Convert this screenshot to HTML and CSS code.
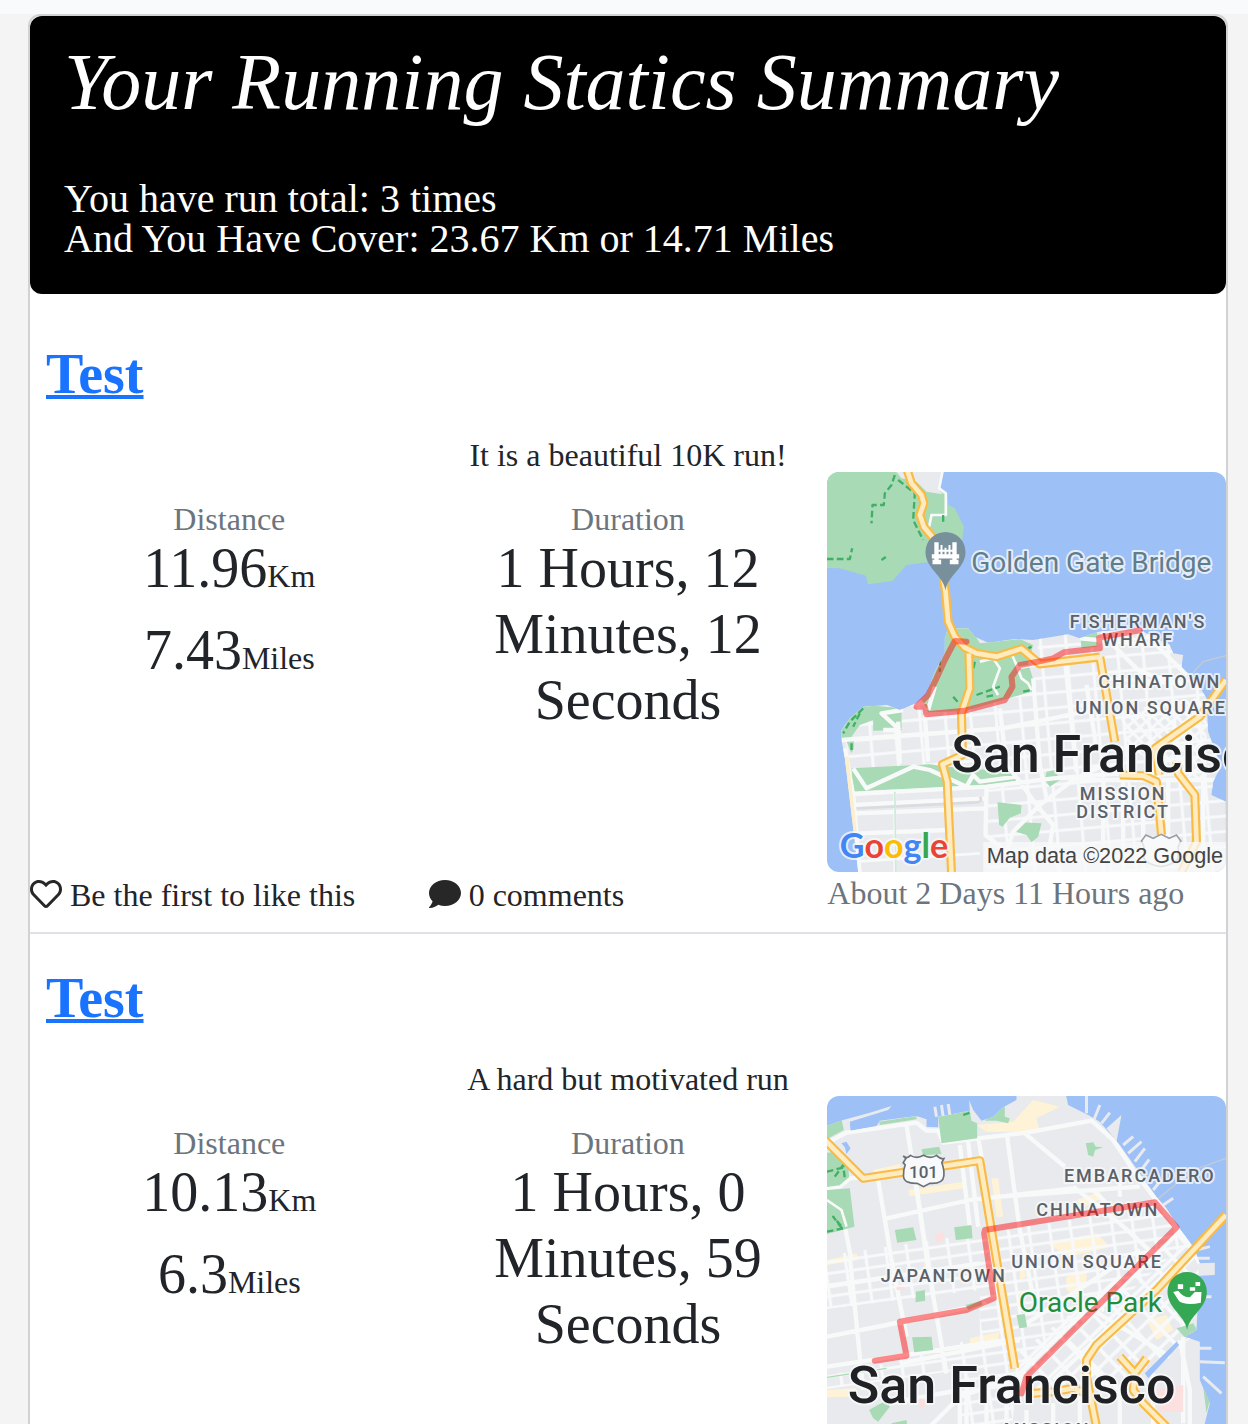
FILE: index.html
```html
<!DOCTYPE html>
<html lang="en">
<head>
  <meta charset="utf-8">
  <meta name="viewport" content="width=device-width, initial-scale=1">
  <title>Your Running Statics Summary</title>
  <link rel="stylesheet" href="styles.css">
</head>
<body>
  <div class="topbar"></div>
  <main class="feed">
    <header class="summary">
      <h1 class="summary-title">Your Running Statics Summary</h1>
      <p class="summary-text">You have run total: 3 times</p>
      <p class="summary-text">And You Have Cover: 23.67 Km or 14.71 Miles</p>
    </header>

    <article class="run">
      <h2 class="run-title"><a href="#run-1">Test</a></h2>
      <p class="run-note">It is a beautiful 10K run!</p>
      <div class="run-grid">
        <section class="stat">
          <p class="stat-label">Distance</p>
          <p class="stat-value">11.96<span class="unit">Km</span></p>
          <p class="stat-value">7.43<span class="unit">Miles</span></p>
        </section>
        <section class="stat">
          <p class="stat-label">Duration</p>
          <p class="stat-value">1 Hours, 12 Minutes, 12 Seconds</p>
        </section>
        <svg class="map" viewBox="21 21 1197 1200" preserveAspectRatio="xMidYMid slice" role="img" aria-label="Route map, Golden Gate Bridge to Fisherman's Wharf">
          <defs>
            <pattern id="blocks-a" width="76" height="46" patternUnits="userSpaceOnUse" patternTransform="rotate(-5)">
              <path d="M0 5H76M5 0V46" stroke="#f8f9fa" stroke-width="9" fill="none"/>
            </pattern>
            <pattern id="blocks-b" width="26" height="26" patternUnits="userSpaceOnUse" patternTransform="rotate(-42)">
              <path d="M0 5H26M5 0V26" stroke="#f8f9fa" stroke-width="9" fill="none"/>
            </pattern>
            <path id="land-a" d="M375 520L385 490L445 490L465 515L505 533L585 522L640 525L745 508L780 520L835 500L950 490L1050 540L1060 565L1090 570L1085 605L1130 650L1160 700L1165 800L1190 870L1205 900L1180 950L1175 990L1218 1010V1221H115L100 1090L75 880L65 825L65 795L90 760L130 725L200 720L240 735L290 715L320 690L345 620L375 565Z"/>
            <clipPath id="clip-a"><use href="#land-a"/></clipPath>
          </defs>
          <rect class="water" x="0" y="0" width="1240" height="1240"/>
          <path class="park" d="M0 0H370L358 70L382 85L385 120L405 130L432 185L425 240L340 280L320 292L260 300L218 348L145 358L138 332L60 310L0 308Z"/>
          <path class="land" d="M225 15H372L355 70L368 88L320 80L290 50L245 40Z"/>
          <path class="street" d="M368 20L358 70L378 85V150H335L328 185"/>
          <path class="trail" d="M225 30L215 60L195 85L192 120L158 120L155 175M235 45L285 85L280 165L310 225M21 282H90L97 250M185 285L198 276M370 150V170"/>
          <use href="#land-a" class="land"/>
          <g clip-path="url(#clip-a)">
            <path fill="url(#blocks-a)" d="M60 720L640 640L660 500H1220V1221H500V960H100Z"/>
            <path fill="url(#blocks-b)" d="M900 740L1110 700L1160 700V960L1010 900L920 840Z"/>
            <path class="park" d="M375 485H450L480 535L600 522L640 540L625 595L650 675L550 705L435 738L325 742L300 690L345 620L365 560ZM780 502L832 500V545L785 550ZM60 830L65 795L90 760L130 720L245 728V795L160 797V765L120 780L95 815ZM78 825L102 818V850L95 865ZM95 910L330 898L385 905L590 922L588 955L440 965L180 975L98 980ZM680 920L705 915L720 945L690 965L675 945ZM533 1012L605 1020L603 1045L570 1058L548 1085L538 1080ZM600 1072L665 1075L655 1115L635 1132L620 1110L588 1100Z"/>
            <path class="street wide" d="M65 825L550 790L820 735M75 850L100 990L120 1230M100 987L500 965L700 940L900 925M105 1020L500 1000M110 1045L500 1030M190 795L240 795M240 795L185 745L250 735M345 665L325 735M235 770L240 895M315 750L325 890M500 965L497 1110L560 1160L580 1100L660 1020L760 945L850 900M540 730L560 900L600 950L650 1020L700 1080L690 1140L720 1220M640 640L660 900L680 1000M735 580L770 920M800 660L830 850M100 910L140 970L280 905L330 915L440 965L460 930L480 950L590 935M780 945H1218M850 950V1221M910 950V1221M970 1000V1221M1045 950V1130M1150 930V1221M780 520L1050 545M880 540L960 620L1090 660M980 510L1100 630M840 640L1090 655M120 1105L380 1095"/>
            <path class="street" d="M480 590L520 580L540 610L520 665L535 690M570 555L590 600L605 640L625 655L635 675M590 610L650 600M110 1190L480 1165M225 980V1221"/>
            <path d="M110 1030L470 1012Q490 1010 480 995" fill="none" stroke="#dadce0" stroke-width="8"/>
            <path d="M225 980L228 1221" fill="none" stroke="#ceead6" stroke-width="5"/>
            <path d="M80 875L105 1100" fill="none" stroke="#fdefcb" stroke-width="12"/>
            <path class="trail" d="M130 730L90 770L70 805M120 745L100 785M95 835V860M360 580V620M465 590L455 640M400 695L415 712M470 690L540 665M610 680L632 676M500 695L525 690M625 550L635 545"/>
          </g>
          <path d="M1110 635L1150 590L1218 572" fill="none" stroke="#c5cad2" stroke-width="4"/>
          <path class="highway-edge" d="M262 15L275 55L305 90L312 115L300 150L312 185L345 225L375 285M370 340L377 380L385 470L405 515L435 548L470 565L530 575L605 551L660 597L840 576M447 565L450 670L425 745L428 870L368 898L382 950L395 1221M840 576L855 660L885 830M900 930L970 932L1010 950L1025 1110M1218 645L1140 755L1005 850L1018 930M1070 890L1075 925L1125 990L1130 1130L1085 1221"/>
          <path class="highway" d="M262 15L275 55L305 90L312 115L300 150L312 185L345 225L375 285M370 340L377 380L385 470L405 515L435 548L470 565L530 575L605 551L660 597L840 576M447 565L450 670L425 745L428 870L368 898L382 950L395 1221M840 576L855 660L885 830M900 930L970 932L1010 950L1025 1110M1218 645L1140 755L1005 850L1018 930M1070 890L1075 925L1125 990L1130 1130L1085 1221"/>
          <path d="M377 376C370 330 317 310 317 261A60 60 0 0 1 437 261C437 310 384 330 377 376Z" fill="#78909c"/>
          <path d="M350 232V292M404 232V292M336 274H418M338 291H364M390 291H416" fill="none" stroke="#fff" stroke-width="13"/>
          <path d="M350 257H404M365 240V274M377 248V274M389 240V274" fill="none" stroke="#fff" stroke-width="6"/>
          <text class="place bridge" x="454" y="320">Golden Gate Bridge</text>
          <text class="area" x="955" y="490">FISHERMAN'S</text>
          <text class="area" x="955" y="543">WHARF</text>
          <text class="area" x="1020" y="668">CHINATOWN</text>
          <text class="area" x="994" y="746">UNION SQUARE</text>
          <text class="city" x="394" y="920">San Francisco</text>
          <text class="area" x="910" y="1005">MISSION</text>
          <text class="area" x="910" y="1058">DISTRICT</text>
          <path class="route" d="M960 496L838 518L840 550L732 562L700 580L655 590L600 600L575 635L578 665L555 705L435 737L320 748L315 725H290L325 690L350 640L375 585L405 528L440 530"/>
          <path d="M965 1128L978 1110L1000 1120L1024 1108L1048 1120L1070 1110L1083 1128L1075 1145V1180Q1060 1200 1024 1205Q985 1200 972 1180V1145Z" fill="#f8f9fa" stroke="#9aa0a6" stroke-width="5"/>
          <rect x="490" y="1131" width="728" height="90" fill="#f8f9fa" opacity=".75"/>
          <text class="logo" x="60" y="1179"><tspan fill="#4285f4">G</tspan><tspan fill="#ea4335">o</tspan><tspan fill="#fbbc04">o</tspan><tspan fill="#4285f4">g</tspan><tspan fill="#34a853">l</tspan><tspan fill="#ea4335">e</tspan></text>
          <text class="credit" x="501" y="1195">Map data ©2022 Google</text>
        </svg>
      </div>
      <footer class="run-footer">
        <button class="action" type="button"><svg class="icon" viewBox="0 0 512 512" aria-hidden="true"><path d="M458.4 64.3C400.6 15.7 311.3 23 256 79.3 200.7 23 111.4 15.6 53.6 64.3-21.6 127.6-10.6 230.8 43 285.5l175.4 178.7c10 10.2 23.4 15.9 37.6 15.9 14.3 0 27.6-5.6 37.6-15.8L469 285.6c53.5-54.7 64.7-157.9-10.6-221.3zm-23.6 187.5L259.4 430.5c-2.4 2.4-4.4 2.4-6.8 0L77.2 251.8c-36.5-37.2-43.9-107.6 7.3-150.7 38.9-32.7 98.9-27.8 136.5 10.5l35 35.7 35-35.7c37.8-38.5 97.8-43.2 136.5-10.6 51.1 43.1 43.5 113.9 7.3 150.8z"/></svg>Be the first to like this</button>
        <a class="action" href="#comments-1"><svg class="icon" viewBox="0 0 512 512" aria-hidden="true"><path d="M256 32C114.6 32 0 125.1 0 240c0 49.6 21.4 95 57 130.7C44.5 421.1 2.7 466 2.2 466.5c-2.2 2.3-2.8 5.7-1.5 8.7S4.8 480 8 480c66.3 0 116-31.8 140.6-51.4 32.7 12.3 69 19.4 107.4 19.4 141.4 0 256-93.1 256-208S397.4 32 256 32z"/></svg>0 comments</a>
        <p class="age">About 2 Days 11 Hours ago</p>
      </footer>
    </article>

    <article class="run">
      <h2 class="run-title"><a href="#run-2">Test</a></h2>
      <p class="run-note">A hard but motivated run</p>
      <div class="run-grid">
        <section class="stat">
          <p class="stat-label">Distance</p>
          <p class="stat-value">10.13<span class="unit">Km</span></p>
          <p class="stat-value">6.3<span class="unit">Miles</span></p>
        </section>
        <section class="stat">
          <p class="stat-label">Duration</p>
          <p class="stat-value">1 Hours, 0 Minutes, 59 Seconds</p>
        </section>
        <svg class="map" viewBox="21 18 1197 1200" preserveAspectRatio="xMidYMid slice" role="img" aria-label="Route map, downtown San Francisco">
          <defs>
            <pattern id="blocks-c" width="62" height="34" patternUnits="userSpaceOnUse" patternTransform="rotate(-8)">
              <path d="M0 5H62M5 0V34" stroke="#f8f9fa" stroke-width="9" fill="none"/>
            </pattern>
            <pattern id="blocks-d" width="58" height="42" patternUnits="userSpaceOnUse" patternTransform="rotate(-44)">
              <path d="M0 6H58M6 0V42" stroke="#f8f9fa" stroke-width="11" fill="none"/>
            </pattern>
            <path id="land-b" d="M0 115L70 90L150 68L215 48L205 60L90 95L92 122L170 108L180 92L290 78L320 88V110L355 112V80L450 62L448 30L460 60L485 92L520 80L550 52L590 30V0H735L745 45L805 75L840 95L900 165L960 250L1010 320L1040 355L1075 410L1120 470L1140 520L1130 720L1095 740L1140 755V870L1170 940L1155 1000L1170 1218H0Z"/>
            <clipPath id="clip-b"><use href="#land-b"/></clipPath>
          </defs>
          <rect class="water" x="0" y="0" width="1240" height="1240"/>
          <path d="M822 90L840 45M845 100L870 68M800 70V18M910 165L940 140M925 190L965 155M945 215L975 175M965 240L988 208M1000 300L1020 275M1030 345L1060 325M1110 485L1170 470M1130 505H1170M1130 620H1175M1130 775H1175M1140 815L1215 818M1150 860L1205 910M350 80L345 50M370 80L365 45M390 75L385 42" fill="none" stroke="#e8eaed" stroke-width="9"/>
          <path class="land" d="M860 115L905 75L890 155ZM1130 520L1185 518V555L1130 558Z"/>
          <path d="M1010 330L1120 240L1218 205" fill="none" stroke="#c5cad2" stroke-width="4"/>
          <use href="#land-b" class="land"/>
          <g clip-path="url(#clip-b)">
            <path d="M470 105L580 95L640 30L720 50L650 85L660 125L500 125ZM160 240L240 222L245 240L170 255ZM265 300L430 275L435 295L270 318ZM515 265H535L550 380H530ZM770 330L840 305L850 325L790 350ZM680 460L830 430L870 470L750 500ZM740 560L800 540V580L770 620L740 600ZM450 745L540 725L530 760L450 770ZM980 690L1040 675L1060 720L1010 750ZM21 510L110 490L115 510L21 525ZM21 900L110 895L90 920L21 922ZM310 410L330 560L315 560ZM600 500L620 560L600 570Z" fill="#fef3d6"/>
            <path fill="url(#blocks-c)" d="M0 500L480 430L1010 350L1110 450L880 650L700 740L590 860L560 1218H420V840L0 900V860L200 820L480 740V600L0 660Z"/>
            <path fill="url(#blocks-d)" d="M1080 420L1140 500L1120 740L880 900L790 880L600 920L580 800L740 680Z"/>
            <path class="street wide" d="M0 170L80 128L290 98L320 122H355L370 158L620 128L815 92L880 150L940 240L1100 450L1140 520M260 105L275 200L320 500M175 270L215 510L260 740M290 290L330 560L380 850M420 165L450 410M445 155L475 410M475 140L490 230M562 140L600 420L640 620M615 130L735 230M200 385L450 330L760 295M540 320L960 290M21 295L60 290L90 265L130 262M21 330L65 360L95 510M90 500L130 900M21 590L480 520M21 740L200 705L500 640M21 830L560 750M240 820L600 750M760 290L900 400L1010 500M820 300L860 340M900 270V320M1090 740V1000M1080 750L1110 900V1218M620 700L960 480M600 850L900 560M700 870L1060 530M740 750L900 900M820 660L1050 800M180 945L420 900L420 1218M330 1010L420 920L620 850M440 860V1218M500 850V1218M560 850V1218M620 960V1218M700 940V1218M780 900V1218M900 900V1218M1000 850V1218"/>
            <path class="park" d="M0 95L65 88L72 120L0 158ZM178 95L290 78V88L180 105ZM355 80L450 62L455 92L472 100V145L365 160ZM495 92L555 45V80L570 85L565 100L530 92ZM305 178L358 170L365 192L310 196ZM0 190L60 185L85 220L88 265L65 290L21 295ZM21 300L90 295L104 410L21 432V345ZM225 420L280 412L290 450L232 458ZM403 412L455 405L458 445L408 450ZM798 160L820 157L828 170L850 172L826 180L820 200L805 195ZM288 605L315 600L316 632L287 637ZM437 645L485 632L488 645L445 660ZM590 675L615 672L622 712L598 715ZM277 742L335 740L340 780L283 787ZM148 960L200 930L210 950L175 995L160 985ZM1070 715L1120 700L1132 720L1095 742ZM1150 890L1170 930L1160 970ZM215 1000L260 990L265 1030H210Z"/>
            <path d="M345 435L370 425L375 450L350 458ZM1010 900L1090 885V965H1020ZM230 590H255V600H230ZM297 925L340 930L300 960Z" fill="#fce0e0"/>
            <path class="water" d="M65 160L80 155L92 175L80 192L75 172ZM975 850L1070 755L1078 765L985 865Z"/>
            <path class="street" d="M21 295L60 290L90 265M21 330L65 360L80 410"/>
            <path class="trail" d="M21 245L80 230M45 260L70 225L75 265M21 425L70 415L40 380L70 420M430 75L450 68"/>
            <path d="M21 862L100 850L200 835" fill="none" stroke="#a8dab5" stroke-width="4"/>
          </g>
          <path class="highway-edge" d="M0 135L45 180L130 265L480 212L515 420L585 835M1218 375L1010 600L830 765L800 810V860L830 1010V1218M900 800L945 850L980 805M945 850L940 900L970 940L1040 1010M640 910L700 905L760 895L800 910"/>
          <path class="highway" d="M0 135L45 180L130 265L480 212L515 420L585 835M1218 375L1010 600L830 765L800 810V860L830 1010V1218M900 800L945 850L980 805M945 850L940 900L970 940L1040 1010M640 910L700 905L760 895L800 910"/>
          <path d="M250 218L258 206L250 198Q262 208 272 196Q290 208 311 196Q332 208 350 196Q362 208 372 206L366 218Q374 240 372 258Q370 282 330 280L311 290L292 280Q252 282 251 258Q250 240 256 225Z" fill="#f8f9fa" stroke="#6b7075" stroke-width="5"/>
          <text class="shield" x="311" y="264">101</text>
          <text class="area" x="960" y="276">EMBARCADERO</text>
          <text class="area" x="834" y="378">CHINATOWN</text>
          <text class="area" x="802" y="533">UNION SQUARE</text>
          <text class="area" x="372" y="575">JAPANTOWN</text>
          <text class="place stadium" x="597" y="665">Oracle Park</text>
          <text class="city" x="84" y="939">San Francisco</text>
          <text class="area" x="682" y="1037">MISSION</text>
          <path class="route" d="M165 812L260 797L240 695L440 660L522 625L493 430L495 420L1005 337L1070 412L620 860L605 910"/>
          <path d="M1102 720C1095 675 1043 655 1043 605A59 59 0 0 1 1161 605C1161 655 1109 675 1102 720Z" fill="#34a853"/>
          <path d="M1060 606L1075 602Q1090 622 1110 622L1125 606H1145L1143 638Q1100 648 1078 634ZM1074 583H1090V597H1074ZM1127 576H1141V588H1127ZM1110 592H1126V602H1110Z" fill="#fff"/>
        </svg>
      </div>
      <footer class="run-footer">
        <button class="action" type="button"><svg class="icon" viewBox="0 0 512 512" aria-hidden="true"><path d="M458.4 64.3C400.6 15.7 311.3 23 256 79.3 200.7 23 111.4 15.6 53.6 64.3-21.6 127.6-10.6 230.8 43 285.5l175.4 178.7c10 10.2 23.4 15.9 37.6 15.9 14.3 0 27.6-5.6 37.6-15.8L469 285.6c53.5-54.7 64.7-157.9-10.6-221.3zm-23.6 187.5L259.4 430.5c-2.4 2.4-4.4 2.4-6.8 0L77.2 251.8c-36.5-37.2-43.9-107.6 7.3-150.7 38.9-32.7 98.9-27.8 136.5 10.5l35 35.7 35-35.7c37.8-38.5 97.8-43.2 136.5-10.6 51.1 43.1 43.5 113.9 7.3 150.8z"/></svg>Be the first to like this</button>
      </footer>
    </article>
  </main>
</body>
</html>
```
FILE: styles.css
```css
* {
  box-sizing: border-box;
}

html {
  height: 100%;
  overflow: hidden;
}

body {
  height: 100%;
  margin: 0;
  overflow: auto;
  scrollbar-width: none;
  background: #f4f4f4;
  color: #212529;
  font-family: "Liberation Serif", "Times New Roman", serif;
  font-size: 32px;
  line-height: 48px;
}

h1,
h2,
p {
  margin: 0;
  font-weight: 400;
}

.topbar {
  height: 14px;
  background: #f8fafc;
}

.feed {
  margin: 0 20px 0 28px;
  border: 2px solid #d0d2d3;
  border-radius: 12px;
  background: #fff;
}

.summary {
  padding: 17px 34px 35px;
  border-radius: 12px;
  background: #000;
  color: #fff;
}

.summary-title {
  margin-bottom: 48px;
  font-size: 80px;
  font-style: italic;
  line-height: 98px;
}

.summary-text {
  font-size: 40px;
  line-height: 40px;
}

.run {
  padding: 47px 0 14px;
  border-bottom: 2px solid #dee2e6;
}

.run + .run {
  padding-top: 31px;
}

.run-title {
  margin: 0 16px 32px;
  font-size: 56px;
  font-weight: 700;
  line-height: 66px;
}

.run-title a {
  color: #1a73ff;
  text-decoration-thickness: 4px;
  text-underline-offset: 2px;
  text-decoration-skip-ink: none;
}

.run-note {
  padding-bottom: 1px;
  line-height: 32px;
  text-align: center;
}

.run-grid,
.run-footer {
  display: grid;
  grid-template-columns: repeat(3, 1fr);
}

.stat {
  padding: 31px 48px 0;
  text-align: center;
}

.stat-label {
  color: #6c757d;
  line-height: 32px;
}

.stat-value {
  margin-bottom: 16px;
  font-size: 56px;
  line-height: 66px;
}

.unit {
  font-size: 32px;
  line-height: 32px;
}

.map {
  display: block;
  width: 100%;
  height: 400px;
  border-radius: 12px;
}

.action {
  display: flex;
  align-items: center;
  gap: 8px;
  padding: 0;
  border: 0;
  background: none;
  color: #212529;
  font: inherit;
  line-height: 46px;
  text-align: left;
  text-decoration: none;
}

.icon {
  flex: none;
  width: 32px;
  height: 32px;
  margin-bottom: 2px;
  fill: #272727;
}

.age {
  color: #6c757d;
  line-height: 42px;
}

/* Map drawing, in map units: three to a pixel */

.water {
  fill: #9dc0f7;
}

.land {
  fill: #e8eaed;
}

.park {
  fill: #a8dab5;
}

.trail,
.street,
.highway,
.highway-edge,
.route {
  fill: none;
  stroke-linejoin: round;
}

.trail {
  stroke: #41b067;
  stroke-width: 7px;
  stroke-dasharray: 20 10;
}

.street {
  stroke: #f8fafa;
  stroke-width: 8px;
}

.street.wide {
  stroke-width: 13px;
}

.highway-edge {
  stroke: #f9bb45;
  stroke-width: 27px;
}

.highway {
  stroke: #feebbf;
  stroke-width: 14px;
}

.route {
  stroke: #ff0000;
  stroke-linecap: round;
  stroke-opacity: 0.45;
  stroke-width: 18px;
}

.map text {
  font-family: Roboto, sans-serif;
  paint-order: stroke;
  stroke: #f8f9fa;
  stroke-linejoin: round;
  stroke-opacity: 0.8;
  stroke-width: 12px;
}

.map .place {
  font-size: 84px;
}

.map .bridge {
  fill: #607d8b;
}

.map .stadium {
  fill: #1e8e3e;
}

.map .area {
  fill: #5b6168;
  font-size: 54px;
  font-weight: 500;
  letter-spacing: 6px;
  text-anchor: middle;
}

.map .city {
  fill: #202124;
  font-size: 156px;
  font-weight: 500;
}

.map .shield {
  fill: #5b6168;
  font-size: 51px;
  font-weight: 500;
  stroke: none;
  text-anchor: middle;
}

.map .logo {
  font-family: Lato, sans-serif;
  font-size: 102px;
  font-weight: 700;
}

.map .credit {
  fill: #444;
  font-family: "Liberation Sans", Arial, sans-serif;
  font-size: 65px;
  stroke: none;
}
```
